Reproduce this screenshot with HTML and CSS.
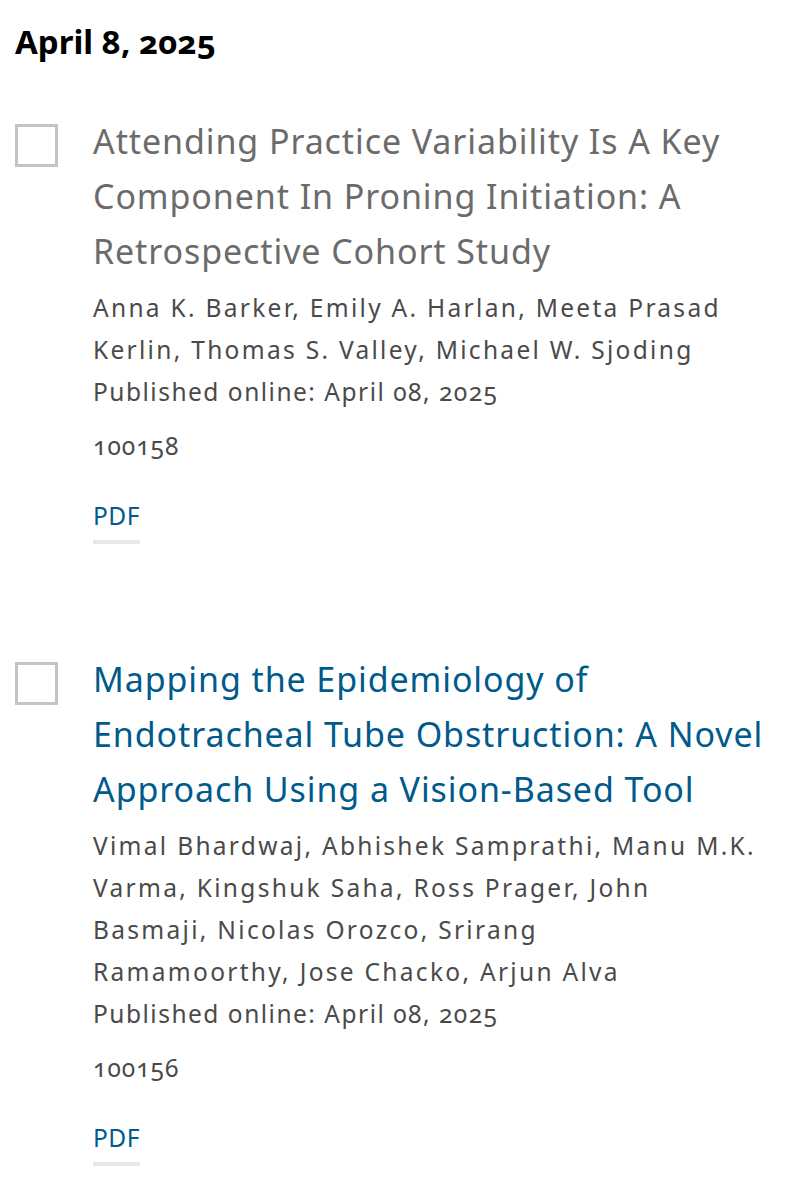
FILE: index.html
```html
<!DOCTYPE html>
<html>
<head>
<meta charset="utf-8">
<link rel="stylesheet" href="styles.css">
</head>
<body>
<div class="page">
  <h2 class="date">April 8, 2025</h2>
  <div class="item">
    <span class="check"></span>
    <div class="body">
      <a class="title visited">Attending Practice Variability Is A Key Component In Proning Initiation: A Retrospective Cohort Study</a>
      <div class="authors">Anna K. Barker, Emily A. Harlan, Meeta Prasad Kerlin, Thomas S. Valley, Michael W. Sjoding</div>
      <div class="pub">Published online: April 08, 2025</div>
      <div class="num">100158</div>
      <a class="pdf">PDF</a>
    </div>
  </div>
  <div class="item second">
    <span class="check"></span>
    <div class="body">
      <a class="title">Mapping the Epidemiology of Endotracheal Tube Obstruction: A Novel Approach Using a Vision-Based Tool</a>
      <div class="authors">Vimal Bhardwaj, Abhishek Samprathi, Manu M.K. Varma, Kingshuk Saha, Ross Prager, John Basmaji, Nicolas Orozco, Srirang<br>Ramamoorthy, Jose Chacko, Arjun Alva</div>
      <div class="pub">Published online: April 08, 2025</div>
      <div class="num">100156</div>
      <a class="pdf">PDF</a>
    </div>
  </div>
</div>
</body>
</html>
```
FILE: styles.css
```css
body {
  margin: 0;
  background: #fff;
  font-family: "Noto Sans", Lato, sans-serif;
  font-variant-numeric: oldstyle-nums;
  font-variant-ligatures: none;
}
.page {
  padding: 22px 15px 0 15px;
}
.date {
  margin: 0;
  font-size: 33px;
  line-height: 40px;
  font-weight: 700;
  color: #000;
}
.item {
  display: flex;
  gap: 35px;
  margin-top: 52px;
}
.item.second {
  margin-top: 108px;
}
.check {
  flex: none;
  width: 37px;
  height: 37px;
  border: 3px solid #c4c4c4;
  margin-top: 10px;
}
.body {
  flex: 1;
  min-width: 0;
}
.title {
  display: block;
  font-size: 34px;
  line-height: 55px;
  letter-spacing: 0.9px;
  color: #005a8c;
}
.title.visited {
  color: #6b6b6b;
}
.authors, .pub, .num {
  font-size: 24.5px;
  line-height: 42px;
  color: #4a4a4a;
}
.authors {
  margin-top: 8px;
  margin-right: 13px;
  letter-spacing: 2.3px;
}
.pub {
  letter-spacing: 1.5px;
}
.num {
  margin-top: 12px;
  letter-spacing: 1px;
}
.pdf {
  display: inline-block;
  margin-top: 28px;
  padding-bottom: 3px;
  font-size: 24.5px;
  line-height: 42px;
  letter-spacing: 0.5px;
  color: #005a8c;
  border-bottom: 4px solid #e8e8e8;
}
```
